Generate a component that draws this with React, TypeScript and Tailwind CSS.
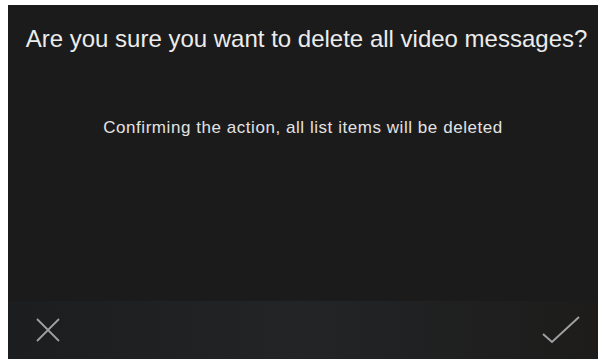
export default function App() {
  return (
    <div className="w-[603px] h-[362px] bg-white pl-[8px] pr-[5px] pt-[5px] pb-[3px]">
      <div
        className="flex h-full w-full flex-col bg-[#1b1b1b] text-[#ececec]"
        style={{ fontFamily: "'Liberation Sans', Arial, sans-serif" }}
      >
        {/* title */}
        <div className="pt-[20px] pl-[7px] text-center text-[24px] leading-[28px]">
          Are you sure you want to delete all video messages?
        </div>

        {/* message */}
        <div className="mt-[65px] text-center text-[17px] leading-[20px] tracking-[0.55px] text-[#e2e2e2]">
          Confirming the action, all list items will be deleted
        </div>

        <div className="flex-1" />

        {/* actions */}
        <div className="flex h-[58px] items-center justify-between bg-gradient-to-r from-[#1c1d1f] via-[#222426] to-[#1d1c1b] pl-[27px] pr-[18px]">
          <button className="flex items-center" aria-label="Cancel">
            <svg width="26" height="26" viewBox="0 0 26 26" fill="none" stroke="#a0a0a0" strokeWidth="1.8">
              <path d="M2 2l22 22M24 2L2 24" />
            </svg>
          </button>
          <button className="flex items-center" aria-label="Confirm">
            <svg width="38" height="28" viewBox="0 0 38 28" fill="none" stroke="#a0a0a0" strokeWidth="2">
              <path d="M1 18l9 8L37 1" />
            </svg>
          </button>
        </div>
      </div>
    </div>
  );
}
